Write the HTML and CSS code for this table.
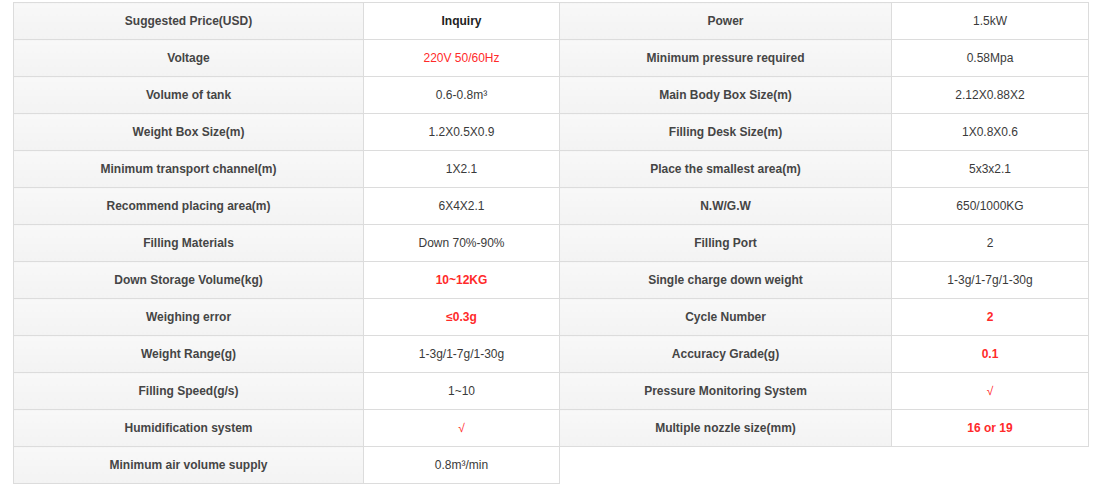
FILE: index.html
```html
<!DOCTYPE html>
<html>
<head>
<meta charset="utf-8">
<link rel="stylesheet" href="styles.css">
</head>
<body>
<table class="spec">
  <colgroup>
    <col class="c1"><col class="c2"><col class="c3"><col class="c4">
  </colgroup>
  <tbody>
    <tr><th>Suggested Price(USD)</th><td class="strong">Inquiry</td><th>Power</th><td>1.5kW</td></tr>
    <tr><th>Voltage</th><td class="red">220V 50/60Hz</td><th>Minimum pressure required</th><td>0.58Mpa</td></tr>
    <tr><th>Volume of tank</th><td>0.6-0.8m³</td><th>Main Body Box Size(m)</th><td>2.12X0.88X2</td></tr>
    <tr><th>Weight Box Size(m)</th><td>1.2X0.5X0.9</td><th>Filling Desk Size(m)</th><td>1X0.8X0.6</td></tr>
    <tr><th>Minimum transport channel(m)</th><td>1X2.1</td><th>Place the smallest area(m)</th><td>5x3x2.1</td></tr>
    <tr><th>Recommend placing area(m)</th><td>6X4X2.1</td><th>N.W/G.W</th><td>650/1000KG</td></tr>
    <tr><th>Filling Materials</th><td>Down 70%-90%</td><th>Filling Port</th><td>2</td></tr>
    <tr><th>Down Storage Volume(kg)</th><td class="red strong">10~12KG</td><th>Single charge down weight</th><td>1-3g/1-7g/1-30g</td></tr>
    <tr><th>Weighing error</th><td class="red strong">≤0.3g</td><th>Cycle Number</th><td class="red strong">2</td></tr>
    <tr><th>Weight Range(g)</th><td>1-3g/1-7g/1-30g</td><th>Accuracy Grade(g)</th><td class="red strong">0.1</td></tr>
    <tr><th>Filling Speed(g/s)</th><td>1~10</td><th>Pressure Monitoring System</th><td class="red">√</td></tr>
    <tr><th>Humidification system</th><td class="red">√</td><th>Multiple nozzle size(mm)</th><td class="red strong">16 or 19</td></tr>
    <tr><th>Minimum air volume supply</th><td>0.8m³/min</td></tr>
  </tbody>
</table>
</body>
</html>
```

FILE: styles.css
```css
html, body {
  margin: 0;
  padding: 0;
  background: #ffffff;
}
body {
  padding: 2px 8px 0 13px;
  font-family: "Liberation Sans", Arial, sans-serif;
  font-size: 12px;
}
.spec {
  border-collapse: collapse;
  table-layout: fixed;
  width: 1075px;
}
.c1 { width: 350px; }
.c2 { width: 196px; }
.c3 { width: 332px; }
.c4 { width: 197px; }
.spec th,
.spec td {
  height: 36px;
  padding: 0 6px;
  border: 1px solid #dcdcdc;
  text-align: center;
  vertical-align: middle;
  line-height: 16px;
}
.spec th {
  background: linear-gradient(#f8f8f8, #f3f3f3);
  color: #454545;
  font-weight: bold;
}
.spec td {
  background: #ffffff;
  color: #3a3a3a;
  font-weight: normal;
}
.spec td.strong {
  font-weight: bold;
  color: #222222;
}
.spec td.red {
  color: #ff2a2a;
}
```
